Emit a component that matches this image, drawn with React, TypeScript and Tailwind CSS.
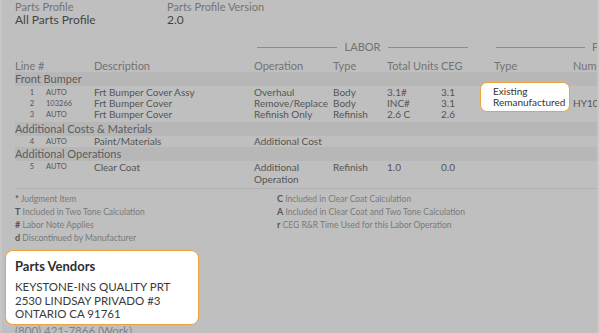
import React from "react";

const COLS = [79, 160, 79, 54, 54, 53, 79, 60];

function Row({ cells, h = "h-[11px] leading-[11px]" }: { cells: React.ReactNode[]; h?: string }) {
  return (
    <div className={`flex ${h} text-[10px] text-[#555]`}>
      {cells.map((c, i) => (
        <div key={i} style={{ width: COLS[i] }} className="shrink-0 whitespace-nowrap">
          {c}
        </div>
      ))}
    </div>
  );
}

function LineNo({ n, code }: { n: string; code: string }) {
  return (
    <div className="flex text-[7.5px]">
      <span className="w-[19px] text-right">{n}</span>
      <span className="ml-[12px]">{code}</span>
    </div>
  );
}

function Band({ children }: { children: React.ReactNode }) {
  return (
    <div className="h-[14px] leading-[14px] bg-[#b7b7b7] text-[11px] text-[#5c5c5c] -mr-[20px]">
      {children}
    </div>
  );
}

function Legend({ k, t }: { k: string; t: string }) {
  return (
    <div className="h-[13px] leading-[13px] text-[8.5px] text-[#7a7a7a] whitespace-nowrap">
      <span className="font-bold text-[#555] text-[9px]">{k}</span> {t}
    </div>
  );
}

export default function App() {
  return (
    <div className="w-[599px] h-[333px] overflow-hidden bg-[#bfbfbf] font-['Lato',sans-serif] relative border-l-2 border-r-2 border-[#c6c6c6]">
      <div className="pl-[13px] relative">
        {/* top info */}
        <div className="flex">
          <div className="w-[152px] shrink-0">
            <div className="text-[11px] leading-[13px] text-[#737373]">Parts Profile</div>
            <div className="text-[12px] leading-[14px] text-[#454545]">All Parts Profile</div>
          </div>
          <div>
            <div className="text-[11px] leading-[13px] text-[#737373]">Parts Profile Version</div>
            <div className="text-[12px] leading-[14px] text-[#454545]">2.0</div>
          </div>
        </div>

        {/* group header */}
        <div className="flex items-center h-[14px] mt-[13px] text-[11px] text-[#737373] whitespace-nowrap">
          <div className="w-[242px] shrink-0" />
          <div className="w-[80px] shrink-0 h-px bg-[#8c8c8c]" />
          <div className="w-[51px] shrink-0 text-center">LABOR</div>
          <div className="w-[80px] shrink-0 h-px bg-[#8c8c8c]" />
          <div className="w-[28px] shrink-0" />
          <div className="w-[89px] shrink-0 h-px bg-[#8c8c8c]" />
          <div className="pl-[7px] shrink-0">PARTS</div>
        </div>

        {/* column headers */}
        <div className="flex h-[13px] leading-[13px] mt-[5px] text-[11px] text-[#737373]">
          {["Line #", "Description", "Operation", "Type", "Total Units", "CEG", "Type", "Number"].map((t, i) => (
            <div key={i} style={{ width: COLS[i] }} className="shrink-0 whitespace-nowrap">
              {t}
            </div>
          ))}
        </div>

        <Band>Front Bumper</Band>
        <div className="pt-[1px]">
          <Row cells={[<LineNo n="1" code="AUTO" />, "Frt Bumper Cover Assy", "Overhaul", "Body", "3.1#", "3.1", "", ""]} />
          <Row cells={[<LineNo n="2" code="103266" />, "Frt Bumper Cover", "Remove/Replace", "Body", "INC#", "3.1", "", "HY1000298"]} />
          <Row cells={[<LineNo n="3" code="AUTO" />, "Frt Bumper Cover", "Refinish Only", "Refinish", "2.6 C", "2.6", "", ""]} />
        </div>
        <div className="h-[2px]" />
        <Band>Additional Costs &amp; Materials</Band>
        <Row cells={[<LineNo n="4" code="AUTO" />, "Paint/Materials", "Additional Cost", "", "", "", "", ""]} />
        <Band>Additional Operations</Band>
        <div className="flex text-[10px] text-[#555] leading-[12px]">
          <div style={{ width: COLS[0] }} className="shrink-0"><LineNo n="5" code="AUTO" /></div>
          <div style={{ width: COLS[1] }} className="shrink-0">Clear Coat</div>
          <div style={{ width: COLS[2] }} className="shrink-0">Additional<br />Operation</div>
          <div style={{ width: COLS[3] }} className="shrink-0">Refinish</div>
          <div style={{ width: COLS[4] }} className="shrink-0">1.0</div>
          <div style={{ width: COLS[5] }} className="shrink-0">0.0</div>
        </div>

        <div className="h-px bg-[#b0b0b0] mt-[3px] -mr-[20px]" />

        {/* legend */}
        <div className="flex mt-[3px]">
          <div className="w-[262px] shrink-0">
            <Legend k="*" t="Judgment Item" />
            <Legend k="T" t="Included in Two Tone Calculation" />
            <Legend k="#" t="Labor Note Applies" />
            <Legend k="d" t="Discontinued by Manufacturer" />
          </div>
          <div>
            <Legend k="C" t="Included in Clear Coat Calculation" />
            <Legend k="A" t="Included in Clear Coat and Two Tone Calculation" />
            <Legend k="r" t="CEG R&R Time Used for this Labor Operation" />
          </div>
        </div>

        {/* vendors */}
        <div className="mt-[6px] -ml-[10px] w-[194px] h-[75px] bg-white border-[1.5px] border-[#eda33c] rounded-[8px] pl-[9px] pt-[6px]">
          <div className="text-[13px] leading-[18px] font-bold text-[#2e2e2e]">Parts Vendors</div>
          <div className="mt-[5px] text-[11.5px] leading-[13.5px] text-[#3a3a3a] whitespace-nowrap">
            <div>KEYSTONE-INS QUALITY PRT</div>
            <div>2530 LINDSAY PRIVADO #3</div>
            <div>ONTARIO CA 91761</div>
          </div>
        </div>
        <div className="text-[11.5px] leading-[13px] text-[#7b8290] -mt-[1px]">(800) 421-7866 (Work)</div>

        {/* highlight over parts type */}
        <div className="absolute left-[478px] top-[82px] w-[90px] h-[30px] bg-white border-[1.5px] border-[#eda33c] rounded-[7px] pl-[12px] pt-[3px] text-[10px] leading-[11px] text-[#333]">
          <div>Existing</div>
          <div>Remanufactured</div>
        </div>
      </div>
    </div>
  );
}
